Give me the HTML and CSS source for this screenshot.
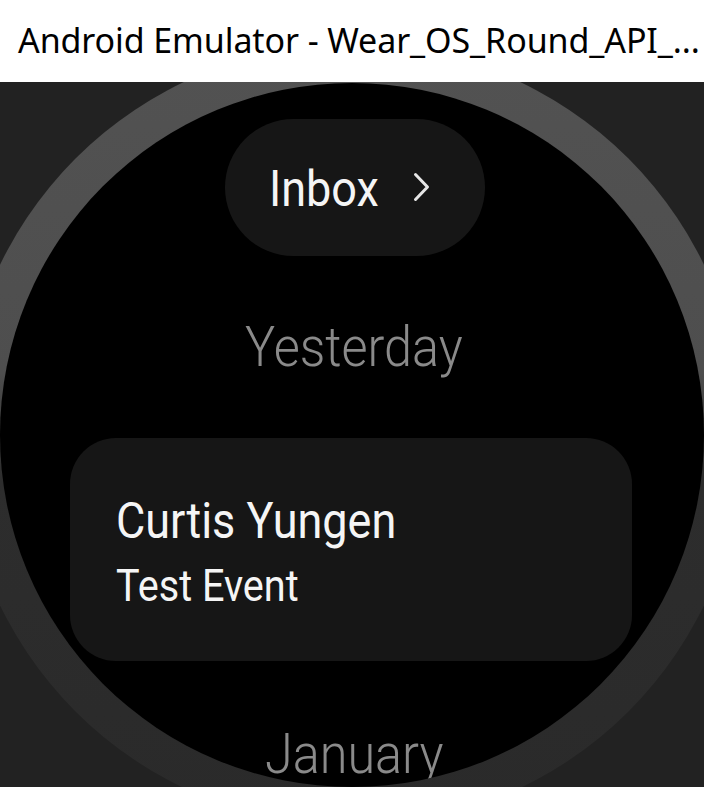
FILE: index.html
```html
<!DOCTYPE html>
<html>
<head>
<meta charset="utf-8">
<link rel="stylesheet" href="styles.css">
</head>
<body>
<div class="titlebar"><span class="title">Android Emulator - Wear_OS_Round_API_...</span></div>
<div class="stage">
  <div class="bezel">
    <div class="screen">
      <div class="chip">
        <span class="chip-label">Inbox</span>
        <svg class="chevron" width="17" height="30" viewBox="0 0 17 30"><path d="M2.5 2.5 L14.5 15 L2.5 27.5" fill="none" stroke="#e6e6e6" stroke-width="3" stroke-linecap="round" stroke-linejoin="round"/></svg>
      </div>
      <div class="header"><span class="header-text">Yesterday</span></div>
      <div class="card">
        <div class="card-title"><span class="sq">Curtis Yungen</span></div>
        <div class="card-sub"><span class="sq">Test Event</span></div>
      </div>
      <div class="header header-last"><span class="header-text">January</span></div>
    </div>
  </div>
</div>
</body>
</html>
```

FILE: styles.css
```css
html, body {
  margin: 0;
  padding: 0;
  background: #222222;
  overflow: hidden;
}

.titlebar {
  height: 82px;
  background: #ffffff;
  display: flex;
  align-items: center;
  padding-left: 18px;
  box-sizing: border-box;
}

.title {
  font-family: "Noto Sans", "Open Sans", sans-serif;
  font-size: 34px;
  color: #000000;
  white-space: nowrap;
  letter-spacing: -0.1px;
  padding-bottom: 2px;
}

.stage {
  height: 705px;
  background: #222222;
  display: flex;
  justify-content: center;
  align-items: center;
  overflow: hidden;
}

.bezel {
  flex: none;
  width: 782px;
  height: 782px;
  border-radius: 50%;
  background: linear-gradient(to bottom, #525252 0%, #4e4e4e 42%, #2d2d2d 56%, #2a2a2a 100%);
  display: flex;
  justify-content: center;
  align-items: center;
}

.screen {
  flex: none;
  width: 704px;
  height: 704px;
  border-radius: 50%;
  background: #000000;
  overflow: hidden;
  display: flex;
  flex-direction: column;
  align-items: center;
  padding-top: 36px;
  padding-left: 4px;
  box-sizing: border-box;
  font-family: Roboto, "Liberation Sans", sans-serif;
}

.chip {
  flex: none;
  width: 260px;
  height: 137px;
  border-radius: 69px;
  background: #161616;
  display: flex;
  align-items: center;
  justify-content: flex-start;
  box-sizing: border-box;
  padding-left: 44px;
  margin-left: 2px;
}

.chip-label {
  display: inline-block;
  font-size: 50px;
  font-weight: 400;
  color: #f5f5f5;
  line-height: 60px;
  transform: scaleX(0.9);
  transform-origin: left center;
  margin-top: 4px;
}

.chevron {
  display: block;
  margin-left: 22px;
}

.header {
  margin-top: 59px;
  height: 64px;
  line-height: 64px;
  text-align: center;
  white-space: nowrap;
}

.header-last {
  margin-top: 61px;
}

.header-text {
  display: inline-block;
  font-size: 56px;
  font-weight: 300;
  color: #8a8a8a;
  transform: scaleX(0.9);
}

.card {
  flex: none;
  width: 562px;
  height: 223px;
  border-radius: 46px;
  background: #161616;
  margin-top: 59px;
  margin-left: -6px;
  padding: 53px 46px 0 46px;
  box-sizing: border-box;
  color: #f5f5f5;
}

.card-title {
  font-size: 50px;
  line-height: 60px;
  white-space: nowrap;
}

.card-sub {
  font-size: 44px;
  font-weight: 400;
  line-height: 52px;
  margin-top: 9px;
  white-space: nowrap;
}

.sq {
  display: inline-block;
  transform: scaleX(0.9);
  transform-origin: left center;
}
```
